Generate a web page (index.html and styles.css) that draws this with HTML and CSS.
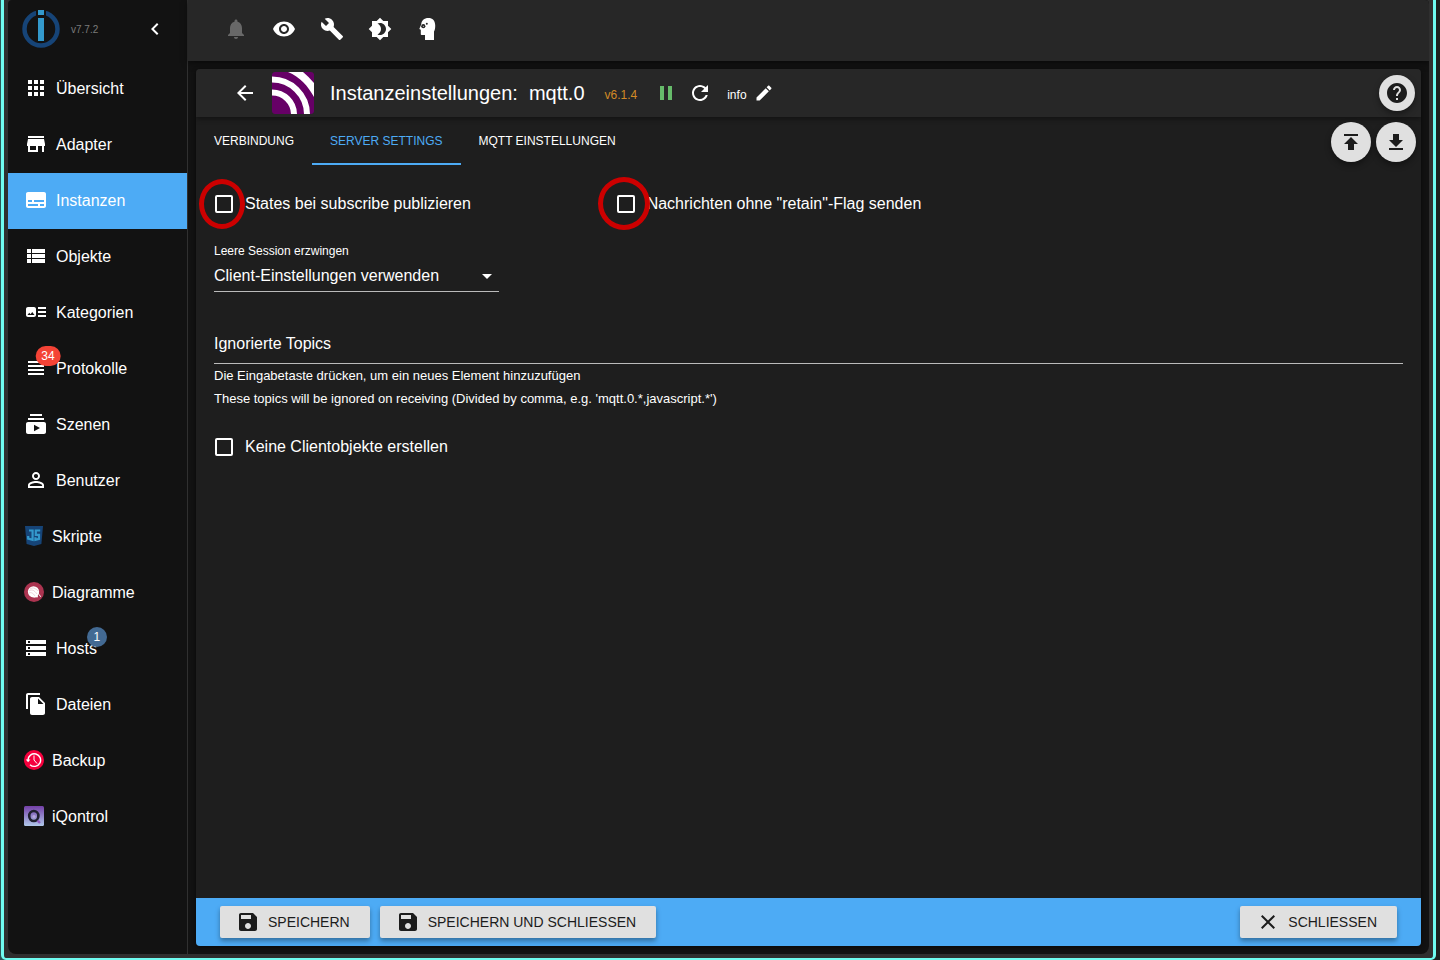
FILE: index.html
```html
<!DOCTYPE html>
<html lang="de">
<head>
    <meta charset="UTF-8">
    <meta name="viewport" content="width=device-width, initial-scale=1.0">
    <title>Instanzeinstellungen: mqtt.0</title>
    <link rel="stylesheet" href="styles.css">
</head>
<body>
    <div class="frame">
        <div class="app">
            <aside class="sidebar">
                <div class="brand">
                    <svg class="logo" viewBox="0 0 38 38">
                        <circle cx="19" cy="19" r="16.5" fill="none" stroke="#164477" stroke-width="4.5"/>
                        <path fill="#121212" d="M14 0h10v8H14z"/>
                        <path fill="#3399cc" d="M16 0h6v5h-6zM16 8h6v23h-6z"/>
                    </svg>
                    <span class="version">v7.7.2</span>
                    <button class="icon-button collapse" aria-label="Menü einklappen">
                        <svg viewBox="0 0 24 24"><path d="M15.41 7.41L14 6l-6 6 6 6 1.41-1.41L10.83 12z"/></svg>
                    </button>
                </div>
                <nav class="menu">
                    <a href="#uebersicht">
                        <svg viewBox="0 0 24 24"><path d="M4 8h4V4H4v4zm6 12h4v-4h-4v4zm-6 0h4v-4H4v4zm0-6h4v-4H4v4zm6 0h4v-4h-4v4zm6-10v4h4V4h-4zm-6 4h4V4h-4v4zm6 6h4v-4h-4v4zm0 6h4v-4h-4v4z"/></svg>
                        <span>Übersicht</span>
                    </a>
                    <a href="#adapter">
                        <svg viewBox="0 0 24 24"><path d="M20 4H4v2h16V4zm1 10v-2l-1-5H4l-1 5v2h1v6h10v-6h4v6h2v-6h1zm-9 4H6v-4h6v4z"/></svg>
                        <span>Adapter</span>
                    </a>
                    <a href="#instanzen" class="active">
                        <svg viewBox="0 0 24 24"><path d="M20 4H4c-1.1 0-2 .9-2 2v12c0 1.1.9 2 2 2h16c1.1 0 2-.9 2-2V6c0-1.1-.9-2-2-2zM4 12h4v2H4v-2zm10 6H4v-2h10v2zm6 0h-4v-2h4v2zm0-4H10v-2h10v2z"/></svg>
                        <span>Instanzen</span>
                    </a>
                    <a href="#objekte">
                        <svg viewBox="0 0 24 24"><path d="M3 14h4v-4H3v4zm0 5h4v-4H3v4zM3 9h4V5H3v4zm5 5h13v-4H8v4zm0 5h13v-4H8v4zM8 5v4h13V5H8z"/></svg>
                        <span>Objekte</span>
                    </a>
                    <a href="#kategorien">
                        <svg viewBox="0 0 24 24"><path d="M22 13h-8v-2h8v2zm0-6h-8v2h8V7zm-8 10h8v-2h-8v2zm-2-8v6c0 1.1-.9 2-2 2H4c-1.1 0-2-.9-2-2V9c0-1.1.9-2 2-2h6c1.1 0 2 .9 2 2zm-1.5 6l-2.25-3-1.75 2.26-1.25-1.51L3.5 15h7z"/></svg>
                        <span>Kategorien</span>
                    </a>
                    <a href="#protokolle">
                        <span class="badged">
                            <svg viewBox="0 0 24 24"><path d="M4 15h16v-2H4v2zm0 4h16v-2H4v2zm0-8h16V9H4v2zm0-6v2h16V5H4z"/></svg>
                            <span class="badge badge-error">34</span>
                        </span>
                        <span>Protokolle</span>
                    </a>
                    <a href="#szenen">
                        <svg viewBox="0 0 24 24"><path d="M20 8H4V6h16v2zm-2-6H6v2h12V2zm4 10v8c0 1.1-.9 2-2 2H4c-1.1 0-2-.9-2-2v-8c0-1.1.9-2 2-2h16c1.1 0 2 .9 2 2zm-6 4l-6-3.27v6.53L16 16z"/></svg>
                        <span>Szenen</span>
                    </a>
                    <a href="#benutzer">
                        <svg viewBox="0 0 24 24"><path d="M12 5.9c1.16 0 2.1.94 2.1 2.1s-.94 2.1-2.1 2.1S9.9 9.16 9.9 8s.94-2.1 2.1-2.1m0 9c2.97 0 6.1 1.46 6.1 2.1v1.1H5.9V17c0-.64 3.13-2.1 6.1-2.1M12 4C9.79 4 8 5.79 8 8s1.79 4 4 4 4-1.79 4-4-1.79-4-4-4zm0 9c-2.67 0-8 1.34-8 4v3h16v-3c0-2.66-5.33-4-8-4z"/></svg>
                        <span>Benutzer</span>
                    </a>
                    <a href="#skripte">
                        <svg class="small" viewBox="0 0 20 20">
                            <path fill="#164477" d="M1 0h18l-1.6 18L10 20l-7.4-2z"/>
                            <path fill="none" stroke="#3399cc" stroke-width="2.2" d="M5 4.5h3.6v9.3L4.200 12.600V10M16.200 4.500h-4.400v4.300H15v4l-3.600 1v-2.600"/>
                        </svg>
                        <span>Skripte</span>
                    </a>
                    <a href="#diagramme">
                        <svg class="small" viewBox="0 0 20 20">
                            <circle cx="10" cy="10" r="10" fill="#ab3450"/>
                            <circle cx="9.5" cy="9.8" r="5.6" fill="#fff"/>
                            <path fill="#fff" d="M9 13l4.500-1 .5 3.300-4 .2z"/>
                            <path fill="none" stroke="#fff" stroke-width="1" d="M13.500 11c2 0 1 3 3.500 3.500"/>
                            <path fill="none" stroke="#ab3450" stroke-width=".2" d="M6 7c3-2 5-1 8 2M5 9c3-2 5-1 8 3M5 11c2-1 4 0 6 3"/>
                        </svg>
                        <span>Diagramme</span>
                    </a>
                    <a href="#hosts">
                        <svg viewBox="0 0 24 24"><path d="M2 20h20v-4H2v4zm2-3h2v2H4v-2zM2 4v4h20V4H2zm4 3H4V5h2v2zm-4 7h20v-4H2v4zm2-3h2v2H4v-2z"/></svg>
                        <span class="badged">Hosts<span class="badge badge-info">1</span></span>
                    </a>
                    <a href="#dateien">
                        <svg viewBox="0 0 24 24"><path d="M16 1H4c-1.100 0-2 .9-2 2v14h2V3h12V1zm-1 4l6 6v10c0 1.100-.9 2-2 2H7.990C6.890 23 6 22.100 6 21l.01-14c0-1.100.89-2 1.990-2h7zm-1 7h5.500L14 6.500V12z"/></svg>
                        <span>Dateien</span>
                    </a>
                    <a href="#backup">
                        <svg class="small" viewBox="0 0 20 20">
                            <circle cx="10" cy="10" r="10" fill="#f5003d"/>
                            <path fill="none" stroke="#fff" stroke-width="1.400" d="M4 10a6.300 6.300 0 1 1 2 4.700"/>
                            <path fill="#fff" d="M1.800 9.500h4.600L4.100 12.300z"/>
                            <path fill="none" stroke="#fff" stroke-width="1" d="M10 5.500V10l3 3.500"/>
                        </svg>
                        <span>Backup</span>
                    </a>
                    <a href="#iqontrol">
                        <svg class="small" viewBox="0 0 20 20">
                            <defs>
                                <linearGradient id="violet" x1="0" y1="0" x2="0" y2="1">
                                    <stop offset="0" stop-color="#7440a8"/>
                                    <stop offset="1" stop-color="#b0c8ea"/>
                                </linearGradient>
                            </defs>
                            <rect width="20" height="20" rx="1.5" fill="url(#violet)"/>
                            <ellipse cx="9.8" cy="10" rx="4.6" ry="5" fill="none" stroke="#202030" stroke-width="2.6"/>
                            <circle cx="10" cy="10.5" r="1.5" fill="#b9a7dc"/>
                            <path stroke="#8f5bc0" stroke-width="2.4" d="M13.500 14.500l2.500 2.500"/>
                        </svg>
                        <span>iQontrol</span>
                    </a>
                </nav>
            </aside>

            <div class="main">
                <header class="topbar">
                    <button class="icon-button" aria-label="Benachrichtigungen" disabled>
                        <svg viewBox="0 0 24 24"><path d="M12 22c1.100 0 2-.9 2-2h-4c0 1.100.890 2 2 2zm6-6v-5c0-3.070-1.640-5.640-4.500-6.320V4c0-.83-.67-1.500-1.500-1.500s-1.500.67-1.500 1.500v.68C7.630 5.360 6 7.920 6 11v5l-2 2v1h16v-1l-2-2z"/></svg>
                    </button>
                    <button class="icon-button" aria-label="Sichtbarkeit">
                        <svg viewBox="0 0 24 24"><path d="M12 4.500C7 4.500 2.730 7.610 1 12c1.730 4.390 6 7.500 11 7.500s9.270-3.110 11-7.500c-1.730-4.390-6-7.500-11-7.500zM12 17c-2.760 0-5-2.240-5-5s2.240-5 5-5 5 2.240 5 5-2.240 5-5 5zm0-8c-1.660 0-3 1.340-3 3s1.340 3 3 3 3-1.340 3-3-1.340-3-3-3z"/></svg>
                    </button>
                    <button class="icon-button" aria-label="Systemeinstellungen">
                        <svg viewBox="0 0 24 24"><path d="M22.700 19l-9.100-9.100c.9-2.300.4-5-1.500-6.900-2-2-5-2.400-7.400-1.300L9 6 6 9 1.600 4.700C.4 7.100.9 10.100 2.900 12.100c1.900 1.900 4.600 2.400 6.900 1.500l9.100 9.100c.4.4 1 .4 1.400 0l2.300-2.300c.5-.4.5-1.100.1-1.400z"/></svg>
                    </button>
                    <button class="icon-button" aria-label="Farbschema">
                        <svg viewBox="0 0 24 24"><path d="M20 8.690V4h-4.690L12 .69 8.690 4H4v4.690L.69 12 4 15.310V20h4.690L12 23.310 15.310 20H20v-4.690L23.310 12 20 8.690zM12 18c-.89 0-1.740-.2-2.500-.55C11.560 16.500 13 14.420 13 12s-1.440-4.500-3.500-5.450C10.260 6.200 11.110 6 12 6c3.310 0 6 2.690 6 6s-2.690 6-6 6z"/></svg>
                    </button>
                    <button class="icon-button" aria-label="Expertenmodus">
                        <svg viewBox="0 0 24 24">
                            <path d="M12.500 1C8 1 5.500 3.500 5.200 7.500L3.300 12l1.500.8v4.400q0 .8.800.8H9v5h9v-8.500c1-1.500 1.300-3.500 1.200-6.500C19 3.500 16.500 1 12.500 1z"/>
                            <circle cx="7.300" cy="9.200" r="2.100" fill="#272727"/>
                            <circle cx="7.300" cy="9.200" r=".5"/>
                            <circle cx="10.800" cy="6.800" r="1" fill="#272727"/>
                        </svg>
                    </button>
                </header>

                <main class="card">
                    <header class="card-header">
                        <button class="icon-button" aria-label="Zurück">
                            <svg viewBox="0 0 24 24"><path d="M20 11H7.830l5.590-5.590L12 4l-8 8 8 8 1.410-1.410L7.830 13H20v-2z"/></svg>
                        </button>
                        <svg class="adapter-icon" viewBox="0 0 42 42">
                            <rect width="42" height="42" rx="2" fill="#606"/>
                            <path fill="none" stroke="#fff" stroke-width="6" d="M0 20.500A22 22 0 0 1 22 42M0 7.500A35 35 0 0 1 35 42"/>
                            <path fill="#fff" d="M16 0h15q6 5 11 11v14C36 14 28 5 16 0z"/>
                        </svg>
                        <h1><span>Instanzeinstellungen:</span><span>mqtt.0</span></h1>
                        <span class="adapter-version">v6.1.4</span>
                        <div class="actions">
                            <button class="icon-button running" aria-label="Anhalten">
                                <svg viewBox="0 0 24 24"><path d="M6 19h4V5H6v14zm8-14v14h4V5h-4z"/></svg>
                            </button>
                            <button class="icon-button" aria-label="Neu starten">
                                <svg viewBox="0 0 24 24"><path d="M17.650 6.350C16.200 4.900 14.210 4 12 4c-4.420 0-7.990 3.580-7.990 8s3.570 8 7.990 8c3.730 0 6.840-2.550 7.730-6h-2.080c-.82 2.330-3.040 4-5.650 4-3.310 0-6-2.690-6-6s2.690-6 6-6c1.660 0 3.140.69 4.220 1.780L13 11h7V4l-2.350 2.350z"/></svg>
                            </button>
                        </div>
                        <div class="loglevel">
                            <span>info</span>
                            <button class="icon-button pencil" aria-label="Protokollstufe ändern">
                                <svg viewBox="0 0 24 24"><path d="M3 17.250V21h3.750L17.810 9.940l-3.750-3.750L3 17.250zM20.710 7.040c.39-.39.39-1.020 0-1.410l-2.340-2.340c-.39-.39-1.020-.39-1.410 0l-1.830 1.830 3.750 3.750 1.830-1.830z"/></svg>
                            </button>
                        </div>
                        <button class="fab help" aria-label="Hilfe">
                            <svg viewBox="0 0 24 24"><path d="M12 2C6.480 2 2 6.480 2 12s4.480 10 10 10 10-4.480 10-10S17.520 2 12 2zm1 17h-2v-2h2v2zm2.070-7.750l-.9.920C13.450 12.900 13 13.500 13 15h-2v-.5c0-1.100.45-2.100 1.170-2.830l1.240-1.260c.37-.36.59-.86.59-1.410 0-1.100-.9-2-2-2s-2 .9-2 2H8c0-2.210 1.790-4 4-4s4 1.790 4 4c0 .88-.36 1.680-.93 2.250z"/></svg>
                        </button>
                    </header>

                    <div class="tabbar">
                        <div class="tabs" role="tablist">
                            <button role="tab">VERBINDUNG</button>
                            <button role="tab" class="selected" aria-selected="true">SERVER SETTINGS</button>
                            <button role="tab">MQTT EINSTELLUNGEN</button>
                        </div>
                        <div class="transfer">
                            <button class="fab" aria-label="Einstellungen laden">
                                <svg viewBox="0 0 24 24"><path d="M5 4v2h14V4H5zm0 10h4v6h6v-6h4l-7-7-7 7z"/></svg>
                            </button>
                            <button class="fab" aria-label="Einstellungen sichern">
                                <svg viewBox="0 0 24 24"><path d="M19 10h-4V4H9v6H5l7 7 7-7zM5 18v2h14v-2H5z"/></svg>
                            </button>
                        </div>
                    </div>

                    <form class="settings" id="settings">
                        <div class="thirds">
                            <label class="check marked">
                                <input type="checkbox">
                                <span>States bei subscribe publizieren</span>
                                <i class="mark mark-first"></i>
                            </label>
                            <label class="check marked">
                                <input type="checkbox">
                                <span>Nachrichten ohne "retain"-Flag senden</span>
                                <i class="mark mark-second"></i>
                            </label>
                        </div>
                        <div class="quarters">
                            <div class="select-field">
                                <label for="session">Leere Session erzwingen</label>
                                <div class="select-box">
                                    <select id="session">
                                        <option>Client-Einstellungen verwenden</option>
                                    </select>
                                    <svg viewBox="0 0 24 24"><path d="M7 10l5 5 5-5z"/></svg>
                                </div>
                            </div>
                        </div>
                        <div class="topics">
                            <input type="text" id="topics" placeholder="Ignorierte Topics" aria-label="Ignorierte Topics" aria-describedby="topics-help">
                            <p>Die Eingabetaste drücken, um ein neues Element hinzuzufügen</p>
                            <p id="topics-help">These topics will be ignored on receiving (Divided by comma, e.g. 'mqtt.0.*,javascript.*')</p>
                        </div>
                        <label class="check">
                            <input type="checkbox">
                            <span>Keine Clientobjekte erstellen</span>
                        </label>
                    </form>

                    <footer class="card-footer">
                        <button class="button" type="submit" form="settings">
                            <svg viewBox="0 0 24 24"><path d="M17 3H5c-1.110 0-2 .9-2 2v14c0 1.100.89 2 2 2h14c1.100 0 2-.9 2-2V7l-4-4zm-5 16c-1.660 0-3-1.340-3-3s1.340-3 3-3 3 1.340 3 3-1.340 3-3 3zm3-10H5V5h10v4z"/></svg>
                            SPEICHERN
                        </button>
                        <button class="button" type="submit" form="settings">
                            <svg viewBox="0 0 24 24"><path d="M17 3H5c-1.110 0-2 .9-2 2v14c0 1.100.89 2 2 2h14c1.100 0 2-.9 2-2V7l-4-4zm-5 16c-1.660 0-3-1.340-3-3s1.340-3 3-3 3 1.340 3 3-1.340 3-3 3zm3-10H5V5h10v4z"/></svg>
                            SPEICHERN UND SCHLIESSEN
                        </button>
                        <button class="button close">
                            <svg viewBox="0 0 24 24"><path d="M19 6.410L17.590 5 12 10.590 6.410 5 5 6.410 10.590 12 5 17.590 6.410 19 12 13.410 17.590 19 19 17.590 13.410 12z"/></svg>
                            SCHLIESSEN
                        </button>
                    </footer>
                </main>
            </div>
        </div>
    </div>
</body>
</html>
```
FILE: styles.css
```css
* {
    box-sizing: border-box;
}
body {
    margin: 0;
    padding: 0 4px 0 1px;
    height: 100vh;
    background: linear-gradient(90deg, #2c5557 50%, #1d211f 50%);
    color: #fff;
    font-family: "Liberation Sans", Arial, sans-serif;
    font-size: 16px;
    line-height: 24px;
}
button, input, select {
    font: inherit;
    color: inherit;
}
button {
    border: 0;
    padding: 0;
    background: none;
    cursor: pointer;
}
svg {
    display: block;
    flex: none;
    width: 24px;
    height: 24px;
    fill: currentColor;
}
.frame {
    height: 100%;
    padding: 0 4px 4px;
    border: 3px solid #6ffbf0;
    border-top: 0;
    border-bottom-width: 2px;
    border-radius: 0 0 5px 5px;
    background-color: #2f2f2f;
}
.app {
    display: flex;
    height: 100%;
    border-radius: 4px 4px 8px 8px;
    background-color: #121212;
    overflow: hidden;
}

/* sidebar */
.sidebar {
    flex: none;
    width: 180px;
    border-right: 1px solid #303030;
}
.brand {
    display: flex;
    align-items: center;
    height: 61px;
    padding: 0 20px 4px 14px;
}
.logo {
    width: 38px;
    height: 38px;
}
.version {
    margin-left: 11px;
    padding-top: 2px;
    font-size: 10px;
    color: #7b7b7b;
}
.collapse {
    margin-left: auto;
}
.menu a {
    display: flex;
    align-items: center;
    gap: 8px;
    height: 56px;
    padding: 0 16px;
    color: #fff;
    text-decoration: none;
}
.menu svg {
    margin-bottom: 2px;
}
.menu .small {
    width: 20px;
    height: 20px;
}
.menu .active {
    background-color: #4dabf5;
}
.badged {
    position: relative;
}
.badge {
    position: absolute;
    top: 0;
    right: 0;
    min-width: 20px;
    height: 20px;
    padding: 0 6px;
    border-radius: 10px;
    font-size: 12px;
    line-height: 20px;
    text-align: center;
    transform: translate(50%, -50%);
}
.badge-error {
    background-color: #f44336;
}
.badge-info {
    background-color: #436a93;
}

/* main area */
.main {
    flex: 1;
    display: flex;
    flex-direction: column;
    min-width: 0;
}
.topbar {
    display: flex;
    align-items: center;
    gap: 24px;
    height: 61px;
    padding: 0 36px 3px;
    background-color: #272727;
    box-shadow: 0 2px 6px rgba(0, 0, 0, 0.5);
}
.icon-button:disabled {
    color: #686868;
}
.card {
    flex: 1;
    display: flex;
    flex-direction: column;
    margin: 8px;
    border-radius: 4px;
    background-color: #1e1e1e;
    box-shadow: 0 1px 4px rgba(0, 0, 0, 0.6);
    overflow: hidden;
}
.card-header {
    display: flex;
    align-items: center;
    height: 48px;
    padding: 0 6px 0 37px;
    background-color: #272727;
    box-shadow: 0 2px 5px rgba(0, 0, 0, 0.4);
}
.adapter-icon {
    width: 42px;
    height: 42px;
    margin: 0 16px 0 15px;
    border-radius: 3px;
}
h1 {
    display: flex;
    gap: 11px;
    margin: 0;
    font-size: 20px;
    font-weight: normal;
}
.adapter-version {
    margin-left: 20px;
    padding-top: 3px;
    font-size: 12px;
    color: #d28a26;
}
.actions {
    display: flex;
    gap: 10px;
    margin: 0 15px 0 17px;
}
.running {
    color: #66bb6a;
}
.loglevel {
    display: flex;
    align-items: center;
    gap: 7px;
    font-size: 12px;
}
.loglevel span {
    padding-top: 3px;
}
.pencil svg {
    width: 20px;
    height: 20px;
}
.fab {
    display: flex;
    align-items: center;
    justify-content: center;
    width: 40px;
    height: 40px;
    border-radius: 50%;
    background-color: #e0e0e0;
    color: #1c1c1c;
    box-shadow: 0 3px 6px rgba(0, 0, 0, 0.4);
}
.help {
    width: 36px;
    height: 36px;
    margin-left: auto;
}
.tabbar {
    display: flex;
    justify-content: space-between;
    height: 48px;
}
.tabs {
    display: flex;
}
.tabs button {
    padding: 2px 18px 0;
    border-bottom: 2px solid transparent;
    font-size: 12px;
}
.tabs .selected {
    border-color: #4dabf5;
    color: #4dabf5;
}
.transfer {
    display: flex;
    gap: 5px;
    padding: 5px;
}

/* form */
.settings {
    flex: 1;
    padding: 18px;
}
.thirds {
    display: grid;
    grid-template-columns: repeat(3, 1fr);
    gap: 16px;
    margin-bottom: 18px;
}
.quarters {
    display: grid;
    grid-template-columns: repeat(4, 1fr);
    gap: 16px;
    margin-bottom: 30px;
}
.check {
    display: flex;
    align-items: center;
    gap: 12px;
    height: 42px;
}
.check input {
    appearance: none;
    width: 18px;
    height: 18px;
    margin: 0 0 0 1px;
    border: 2px solid #fff;
    border-radius: 2px;
}
.check input:checked {
    background-color: #4dabf5;
}
.marked {
    position: relative;
}
.mark {
    position: absolute;
    border: 5px solid #cc0000;
    border-radius: 50%;
    pointer-events: none;
}
.mark-first {
    top: -4px;
    left: -15px;
    width: 46px;
    height: 50px;
}
.mark-second {
    top: -6px;
    left: -18px;
    width: 52px;
    height: 53px;
}
.select-field label {
    display: block;
    font-size: 12px;
    line-height: 16px;
}
.select-box {
    display: flex;
    align-items: center;
    height: 33px;
    padding-top: 2px;
    border-bottom: 1px solid #bbb;
}
.select-box select {
    flex: 1;
    min-width: 0;
    height: 30px;
    margin-right: -24px;
    padding: 0 24px 0 0;
    border: 0;
    background: none;
    appearance: none;
}
.select-box svg {
    pointer-events: none;
}
.topics {
    margin-bottom: 19px;
}
.topics input {
    display: block;
    width: 100%;
    height: 42px;
    padding: 2px 0 0;
    border: 0;
    border-bottom: 1px solid #bbb;
    background: none;
}
.topics input::placeholder {
    color: #fff;
}
.topics p {
    margin: 4px 0 7px;
    font-size: 13px;
    line-height: 16px;
}
.topics p:last-child {
    margin: 0;
}

.card-footer {
    display: flex;
    align-items: center;
    gap: 10px;
    height: 48px;
    padding: 0 24px;
    background-color: #4dabf5;
}
.button {
    display: flex;
    align-items: center;
    gap: 8px;
    height: 32px;
    padding: 0 20px 0 16px;
    border-radius: 2px;
    background-color: #e0e0e0;
    color: #1c1c1c;
    font-size: 14px;
    box-shadow: 0 3px 5px rgba(0, 0, 0, 0.35);
}
.close {
    margin-left: auto;
}
```
